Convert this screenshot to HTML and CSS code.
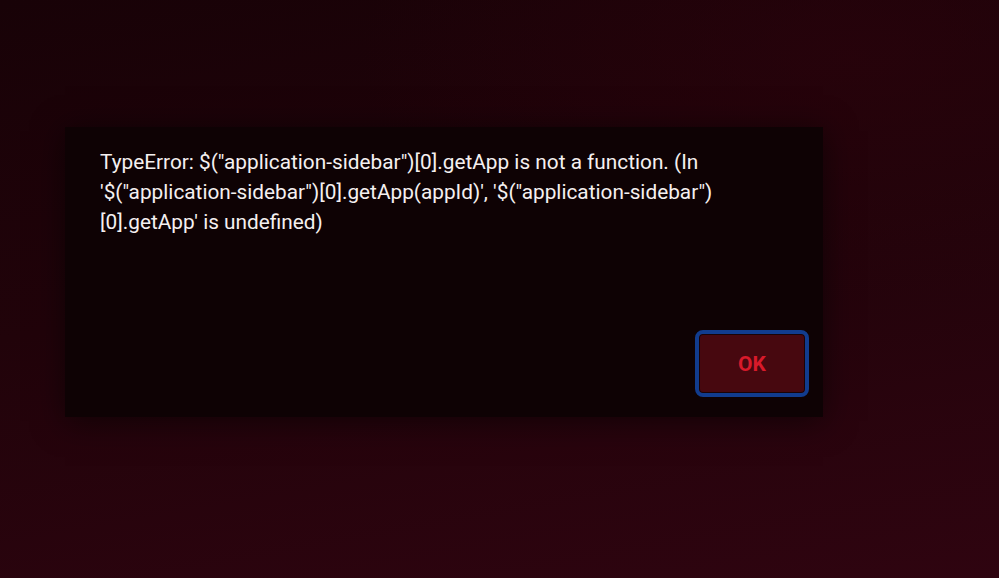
FILE: index.html
```html
<!DOCTYPE html>
<html>
<head>
<meta charset="utf-8">
<link rel="stylesheet" href="styles.css">
</head>
<body>
<div class="dialog">
  <p class="message">TypeError: $("application-sidebar")[0].getApp is not a function. (In '$("application-sidebar")[0].getApp(appId)', '$("application-sidebar")[0].getApp' is undefined)</p>
  <div class="actions">
    <button class="ok">OK</button>
  </div>
</div>
</body>
</html>
```
FILE: styles.css
```css
html, body {
  margin: 0;
  height: 100%;
}
body {
  font-family: Roboto, "Noto Sans", sans-serif;
  background:
    radial-gradient(ellipse 70% 60% at 85% 10%, rgba(44, 3, 12, 0.6), rgba(44, 3, 12, 0) 70%),
    linear-gradient(170deg, #180207 0%, #21030a 45%, #2f0410 100%);
  padding: 127px 0 0 65px;
  box-sizing: border-box;
}
.dialog {
  width: 758px;
  height: 290px;
  box-sizing: border-box;
  background: #0e0204;
  box-shadow: 0 4px 30px rgba(0, 0, 0, 0.55);
  padding: 20px 14px 20px 35px;
  display: flex;
  flex-direction: column;
}
.message {
  margin: 0;
  padding-right: 39px;
  color: #f5f0f0;
  font-size: 20.8px;
  line-height: 30px;
  flex: 1;
}
.actions {
  display: flex;
  justify-content: flex-end;
}
.ok {
  width: 114px;
  height: 67px;
  box-sizing: border-box;
  border: 4px solid #113c8e;
  border-radius: 8px;
  background: #47080f;
  box-shadow: inset 0 0 0 1px #1a0306;
  color: #d81a2a;
  font-family: Roboto, sans-serif;
  font-weight: 700;
  font-size: 21px;
  padding: 0;
}
```
